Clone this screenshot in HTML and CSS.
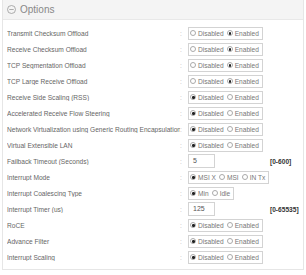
FILE: index.html
```html
<!DOCTYPE html>
<html lang="en">
<head>
  <meta charset="UTF-8" />
  <title>Options</title>
  <link rel="stylesheet" href="styles.css">
</head>
<body>
  <div class="panel">
    <div class="panel-header">
      <svg class="toggle-icon" width="9" height="9" viewBox="0 0 9 9">
        <circle cx="4.5" cy="4.5" r="4" fill="none" stroke="#999" stroke-width="0.8"/>
        <line x1="2.3" y1="4.5" x2="6.7" y2="4.5" stroke="#999" stroke-width="0.8"/>
      </svg>
      <span>Options</span>
    </div>
    <div class="panel-body">
      <div class="row">
        <span class="label">Transmit Checksum Offload</span><span class="colon">:</span>
        <div class="radio-group"><span class="radio"><i class="dot"></i>Disabled</span><span class="radio"><i class="dot on"></i>Enabled</span></div>
      </div>
      <div class="row">
        <span class="label">Receive Checksum Offload</span><span class="colon">:</span>
        <div class="radio-group"><span class="radio"><i class="dot"></i>Disabled</span><span class="radio"><i class="dot on"></i>Enabled</span></div>
      </div>
      <div class="row">
        <span class="label">TCP Segmentation Offload</span><span class="colon">:</span>
        <div class="radio-group"><span class="radio"><i class="dot"></i>Disabled</span><span class="radio"><i class="dot on"></i>Enabled</span></div>
      </div>
      <div class="row">
        <span class="label">TCP Large Receive Offload</span><span class="colon">:</span>
        <div class="radio-group"><span class="radio"><i class="dot"></i>Disabled</span><span class="radio"><i class="dot on"></i>Enabled</span></div>
      </div>
      <div class="row">
        <span class="label">Receive Side Scaling (RSS)</span><span class="colon">:</span>
        <div class="radio-group"><span class="radio"><i class="dot on"></i>Disabled</span><span class="radio"><i class="dot"></i>Enabled</span></div>
      </div>
      <div class="row">
        <span class="label">Accelerated Receive Flow Steering</span><span class="colon">:</span>
        <div class="radio-group"><span class="radio"><i class="dot on"></i>Disabled</span><span class="radio"><i class="dot"></i>Enabled</span></div>
      </div>
      <div class="row">
        <span class="label">Network Virtualization using Generic Routing Encapsulation</span><span class="colon">:</span>
        <div class="radio-group"><span class="radio"><i class="dot on"></i>Disabled</span><span class="radio"><i class="dot"></i>Enabled</span></div>
      </div>
      <div class="row">
        <span class="label">Virtual Extensible LAN</span><span class="colon">:</span>
        <div class="radio-group"><span class="radio"><i class="dot on"></i>Disabled</span><span class="radio"><i class="dot"></i>Enabled</span></div>
      </div>
      <div class="row">
        <span class="label">Failback Timeout (Seconds)</span><span class="colon">:</span>
        <div class="field">5</div>
        <span class="range">[0-600]</span>
      </div>
      <div class="row">
        <span class="label">Interrupt Mode</span><span class="colon">:</span>
        <div class="radio-group"><span class="radio"><i class="dot on"></i>MSI X</span><span class="radio"><i class="dot"></i>MSI</span><span class="radio"><i class="dot"></i>IN Tx</span></div>
      </div>
      <div class="row">
        <span class="label">Interrupt Coalescing Type</span><span class="colon">:</span>
        <div class="radio-group"><span class="radio"><i class="dot on"></i>Min</span><span class="radio"><i class="dot"></i>Idle</span></div>
      </div>
      <div class="row">
        <span class="label">Interrupt Timer (us)</span><span class="colon">:</span>
        <div class="field">125</div>
        <span class="range">[0-65535]</span>
      </div>
      <div class="row">
        <span class="label">RoCE</span><span class="colon">:</span>
        <div class="radio-group"><span class="radio"><i class="dot on"></i>Disabled</span><span class="radio"><i class="dot"></i>Enabled</span></div>
      </div>
      <div class="row">
        <span class="label">Advance Filter</span><span class="colon">:</span>
        <div class="radio-group"><span class="radio"><i class="dot on"></i>Disabled</span><span class="radio"><i class="dot"></i>Enabled</span></div>
      </div>
      <div class="row">
        <span class="label">Interrupt Scaling</span><span class="colon">:</span>
        <div class="radio-group"><span class="radio"><i class="dot on"></i>Disabled</span><span class="radio"><i class="dot"></i>Enabled</span></div>
      </div>
    </div>
  </div>
</body>
</html>
```

FILE: styles.css
```css
body {
  margin: 0;
  background: #ffffff;
  font-family: "Liberation Sans", Arial, sans-serif;
  color: #666;
}
.panel {
  margin-left: 2px;
  width: 300px;
  border: 1px solid #e6e6e6;
  border-top: none;
}
.panel-header {
  height: 20px;
  background: #f4f4f4;
  border-bottom: 1px solid #e8e8e8;
  display: flex;
  align-items: center;
  gap: 4px;
  padding-left: 4px;
  box-sizing: border-box;
  font-size: 10px;
  color: #888;
}
.toggle-icon {
  display: block;
}
.panel-body {
  padding: 5px 0 4px 4px;
}
.row {
  display: flex;
  align-items: center;
  height: 16px;
  font-size: 6.6px;
}
.label {
  width: 173px;
  white-space: nowrap;
  overflow: hidden;
}
.colon {
  width: 8px;
  color: #bbb;
}
.radio-group {
  display: flex;
  align-items: center;
  height: 11px;
  border: 1px solid #d3d3d3;
  padding: 0 3px 0 1px;
  gap: 3px;
  color: #777;
}
.radio {
  display: flex;
  align-items: center;
  gap: 2px;
}
.dot {
  width: 6px;
  height: 6px;
  border: 0.8px solid #aaa;
  border-radius: 50%;
  box-sizing: border-box;
  position: relative;
}
.dot.on::after {
  content: "";
  position: absolute;
  left: 1.4px;
  top: 1.4px;
  width: 2.4px;
  height: 2.4px;
  border-radius: 50%;
  background: #222;
}
.field {
  width: 27px;
  height: 14px;
  border: 1px solid #d3d3d3;
  box-sizing: border-box;
  padding-left: 4px;
  line-height: 12px;
  color: #555;
  font-size: 7px;
}
.range {
  margin-left: 59px;
  font-weight: bold;
  color: #333;
  font-size: 6.6px;
}
.field + .range {
  margin-left: 55px;
}
```
